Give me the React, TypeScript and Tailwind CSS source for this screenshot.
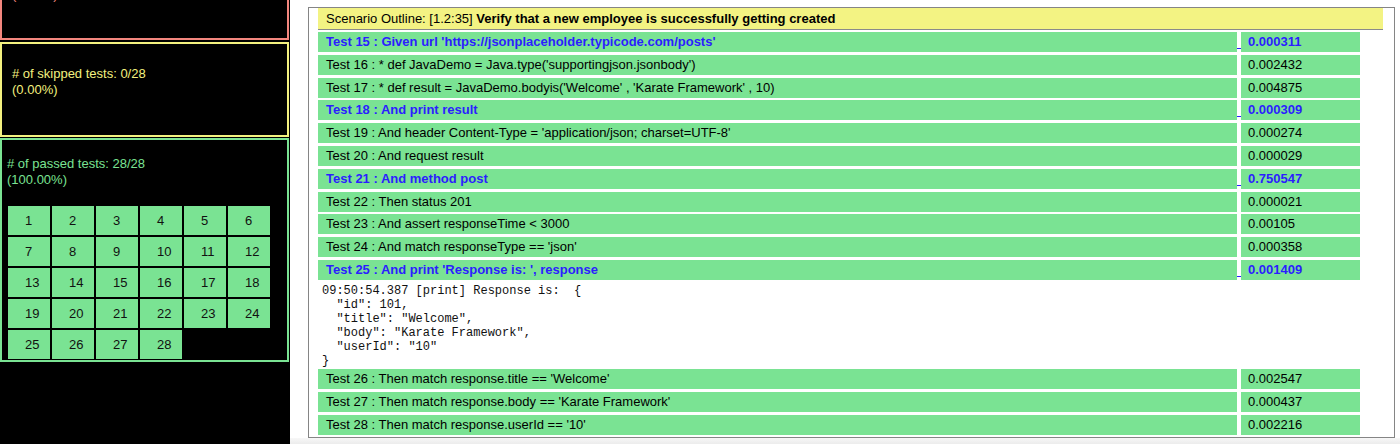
import React from "react";

type Row = { label: string; time: string; hl?: boolean };

const rowsA: Row[] = [
  { label: "Test 15 : Given url 'https://jsonplaceholder.typicode.com/posts'", time: "0.000311", hl: true },
  { label: "Test 16 : * def JavaDemo = Java.type('supportingjson.jsonbody')", time: "0.002432" },
  { label: "Test 17 : * def result = JavaDemo.bodyis('Welcome' , 'Karate Framework' , 10)", time: "0.004875" },
  { label: "Test 18 : And print result", time: "0.000309", hl: true },
  { label: "Test 19 : And header Content-Type = 'application/json; charset=UTF-8'", time: "0.000274" },
  { label: "Test 20 : And request result", time: "0.000029" },
  { label: "Test 21 : And method post", time: "0.750547", hl: true },
  { label: "Test 22 : Then status 201", time: "0.000021" },
  { label: "Test 23 : And assert responseTime < 3000", time: "0.00105" },
  { label: "Test 24 : And match responseType == 'json'", time: "0.000358" },
  { label: "Test 25 : And print 'Response is: ', response", time: "0.001409", hl: true },
];

const rowsB: Row[] = [
  { label: "Test 26 : Then match response.title == 'Welcome'", time: "0.002547" },
  { label: "Test 27 : Then match response.body == 'Karate Framework'", time: "0.000437" },
  { label: "Test 28 : Then match response.userId == '10'", time: "0.002216" },
];

const preText = `09:50:54.387 [print] Response is:  {
  "id": 101,
  "title": "Welcome",
  "body": "Karate Framework",
  "userId": "10"
}`;

function TestRow({ r }: { r: Row }) {
  const txt = r.hl ? "font-bold text-[#2b1dff]" : "text-black";
  return (
    <>
      <div className={`h-[20px] bg-[#7ae393] pl-[8px] leading-[20px] whitespace-nowrap ${txt}`}>{r.label}</div>
      <div className={`relative h-[20px] bg-[#7ae393] pl-[7px] leading-[20px] whitespace-nowrap ${txt}`}>
        {r.hl && <span className="absolute left-[-4px] bottom-[3px] w-[4px] h-[1px] bg-[#2b1dff]" />}
        {r.time}
      </div>
    </>
  );
}

export default function App() {
  const nums = Array.from({ length: 28 }, (_, i) => i + 1);
  return (
    <div
      className="flex w-[1400px] h-[444px] overflow-hidden bg-white text-[13px]"
      style={{ fontFamily: '"Liberation Sans", Arial, sans-serif' }}
    >
      {/* Sidebar */}
      <div className="w-[290px] shrink-0 bg-black flex flex-col">
        <div className="w-[289px] h-[93px] mt-[-53px] border-2 border-[#f3867e] pl-[10px] pt-[22px] leading-[16px] text-[#f3867e]">
          <div># of failed tests: 0/28</div>
          <div>(0.00%)</div>
        </div>
        <div className="w-[289px] h-[95px] mt-[2px] border-2 border-[#f3f17f] pl-[10px] pt-[22px] leading-[16px] text-[#f3f17f]">
          <div># of skipped tests: 0/28</div>
          <div>(0.00%)</div>
        </div>
        <div className="w-[289px] h-[224px] mt-[1px] border-2 border-[#7ae393] pl-[5px] pt-[16px] leading-[16px] text-[#7ae393]">
          <div># of passed tests: 28/28</div>
          <div>(100.00%)</div>
          <div className="mt-[18px] ml-[1px] grid grid-cols-[repeat(6,42px)] auto-rows-[29px] gap-[2px]">
            {nums.map((n) => (
              <div key={n} className="bg-[#7ae393] text-[#111] pl-[17px] leading-[29px]">
                {n}
              </div>
            ))}
          </div>
        </div>
      </div>

      {/* Main */}
      <div className="flex-1 flex flex-col bg-white">
        <div className="ml-[18px] mt-[7px] w-[1087px] h-[431px] shrink-0 border border-[#858585] pl-[9px]">
          <div className="w-[1065px] h-[22px] bg-[#f3f383] border-b border-[#8a8a8a] pl-[8px] leading-[21px] text-black whitespace-nowrap">
            Scenario Outline: [1.2:35] <span className="font-bold">Verify that a new employee is successfully getting created</span>
          </div>
          <div className="mt-[2px] grid grid-cols-[919px_119px] gap-x-[4px] gap-y-[2.8px]">
            {rowsA.map((r) => (
              <TestRow key={r.label} r={r} />
            ))}
            <pre
              className="col-span-2 h-[83.4px] pl-[4px] pt-[1px] text-[12px] leading-[14px] text-[#111] m-0"
              style={{ fontFamily: '"Liberation Mono", "Courier New", monospace' }}
            >
              {preText}
            </pre>
            {rowsB.map((r) => (
              <TestRow key={r.label} r={r} />
            ))}
          </div>
        </div>
        <div className="flex-1 bg-gradient-to-b from-[#f7f7f7] to-[#ececec]" />
      </div>
    </div>
  );
}
